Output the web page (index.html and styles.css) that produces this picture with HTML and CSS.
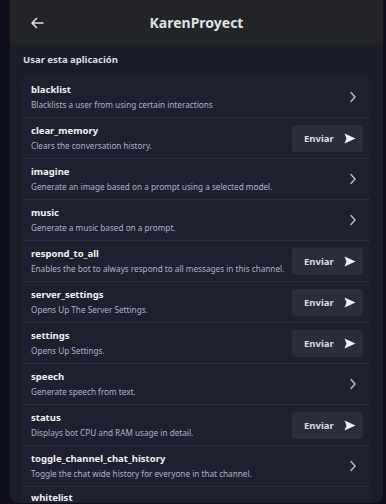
FILE: index.html
```html
<!DOCTYPE html>
<html lang="es">
<head>
    <meta charset="UTF-8">
    <meta name="viewport" content="width=device-width, initial-scale=1.0">
    <title>KarenProyect</title>
    <link rel="stylesheet" href="styles.css">
</head>
<body>

    <div class="panel">
        <div class="header">
            <svg class="back" width="14" height="12" viewBox="0 0 14 12">
                <path d="M13 6H2M6.5 1.5L2 6l4.5 4.5" fill="none" stroke="#dfe1e5" stroke-width="1.6" stroke-linecap="round" stroke-linejoin="round"/>
            </svg>
            <h1 class="title">KarenProyect</h1>
        </div>

        <p class="section-title">Usar esta aplicación</p>

        <div class="list">
            <div class="row">
                <div class="info">
                    <span class="name">blacklist</span>
                    <span class="desc">Blacklists a user from using certain interactions</span>
                </div>
                <svg class="chevron" width="8" height="12" viewBox="0 0 8 12"><path d="M2 1.5L6 6l-4 4.5" fill="none" stroke="#b5bac1" stroke-width="1.5" stroke-linecap="round" stroke-linejoin="round"/></svg>
            </div>
            <div class="row">
                <div class="info">
                    <span class="name">clear_memory</span>
                    <span class="desc">Clears the conversation history.</span>
                </div>
                <button class="send">Enviar <svg width="12" height="11" viewBox="0 0 12 11"><path d="M0.5 0.5L11.5 5.5L0.5 10.5L2.5 5.5Z" fill="#f2f3f5"/></svg></button>
            </div>
            <div class="row">
                <div class="info">
                    <span class="name">imagine</span>
                    <span class="desc">Generate an image based on a prompt using a selected model.</span>
                </div>
                <svg class="chevron" width="8" height="12" viewBox="0 0 8 12"><path d="M2 1.5L6 6l-4 4.5" fill="none" stroke="#b5bac1" stroke-width="1.5" stroke-linecap="round" stroke-linejoin="round"/></svg>
            </div>
            <div class="row">
                <div class="info">
                    <span class="name">music</span>
                    <span class="desc">Generate a music based on a prompt.</span>
                </div>
                <svg class="chevron" width="8" height="12" viewBox="0 0 8 12"><path d="M2 1.5L6 6l-4 4.5" fill="none" stroke="#b5bac1" stroke-width="1.5" stroke-linecap="round" stroke-linejoin="round"/></svg>
            </div>
            <div class="row">
                <div class="info">
                    <span class="name">respond_to_all</span>
                    <span class="desc">Enables the bot to always respond to all messages in this channel.</span>
                </div>
                <button class="send">Enviar <svg width="12" height="11" viewBox="0 0 12 11"><path d="M0.5 0.5L11.5 5.5L0.5 10.5L2.5 5.5Z" fill="#f2f3f5"/></svg></button>
            </div>
            <div class="row">
                <div class="info">
                    <span class="name">server_settings</span>
                    <span class="desc">Opens Up The Server Settings.</span>
                </div>
                <button class="send">Enviar <svg width="12" height="11" viewBox="0 0 12 11"><path d="M0.5 0.5L11.5 5.5L0.5 10.5L2.5 5.5Z" fill="#f2f3f5"/></svg></button>
            </div>
            <div class="row">
                <div class="info">
                    <span class="name">settings</span>
                    <span class="desc">Opens Up Settings.</span>
                </div>
                <button class="send">Enviar <svg width="12" height="11" viewBox="0 0 12 11"><path d="M0.5 0.5L11.5 5.5L0.5 10.5L2.5 5.5Z" fill="#f2f3f5"/></svg></button>
            </div>
            <div class="row">
                <div class="info">
                    <span class="name">speech</span>
                    <span class="desc">Generate speech from text.</span>
                </div>
                <svg class="chevron" width="8" height="12" viewBox="0 0 8 12"><path d="M2 1.5L6 6l-4 4.5" fill="none" stroke="#b5bac1" stroke-width="1.5" stroke-linecap="round" stroke-linejoin="round"/></svg>
            </div>
            <div class="row">
                <div class="info">
                    <span class="name">status</span>
                    <span class="desc">Displays bot CPU and RAM usage in detail.</span>
                </div>
                <button class="send">Enviar <svg width="12" height="11" viewBox="0 0 12 11"><path d="M0.5 0.5L11.5 5.5L0.5 10.5L2.5 5.5Z" fill="#f2f3f5"/></svg></button>
            </div>
            <div class="row">
                <div class="info">
                    <span class="name">toggle_channel_chat_history</span>
                    <span class="desc">Toggle the chat wide history for everyone in that channel.</span>
                </div>
                <svg class="chevron" width="8" height="12" viewBox="0 0 8 12"><path d="M2 1.5L6 6l-4 4.5" fill="none" stroke="#b5bac1" stroke-width="1.5" stroke-linecap="round" stroke-linejoin="round"/></svg>
            </div>
            <div class="row row-cut">
                <div class="info">
                    <span class="name">whitelist</span>
                </div>
            </div>
        </div>
    </div>

</body>
</html>
```

FILE: styles.css
```css
body {
    margin: 0;
    background-color: #0e0f1b;
    font-family: "Noto Sans", "Open Sans", sans-serif;
    height: 504px;
    overflow: hidden;
}
.panel {
    margin: 0 3px 0 10px;
    height: 503px;
    background: #1c1d2b;
    border-radius: 0 0 8px 8px;
    overflow: hidden;
}
.header {
    height: 45px;
    background: #232428;
    display: flex;
    align-items: center;
}
.back {
    margin-left: 20px;
}
.title {
    flex: 1;
    margin: 0 34px 0 0;
    text-align: center;
    font-size: 14px;
    font-weight: 700;
    color: #dfe1e5;
}
.section-title {
    margin: 0;
    padding: 8px 13px 11px;
    font-size: 9.5px;
    font-weight: 700;
    color: #dbdee1;
}
.list {
    margin: 0 12px;
    background: #1e2030;
    border-radius: 6px 6px 0 0;
}
.row {
    display: flex;
    align-items: center;
    height: 40px;
    padding: 0 9px;
    border-bottom: 1px solid #2a2c3b;
}
.row-cut {
    align-items: flex-start;
    padding-top: 6px;
    height: 34px;
}
.info {
    flex: 1;
    display: flex;
    flex-direction: column;
    gap: 3px;
    margin-top: -2px;
}
.name {
    font-size: 9.5px;
    font-weight: 700;
    color: #f2f3f5;
}
.desc {
    font-size: 8.2px;
    color: #adb3c9;
    white-space: nowrap;
}
.chevron {
    margin-right: 5px;
}
.send {
    display: flex;
    align-items: center;
    gap: 10px;
    height: 27px;
    width: 71px;
    padding: 0 0 0 12px;
    border: none;
    border-radius: 4px;
    background: #2b2d3b;
    color: #dbdee1;
    font-family: inherit;
    font-size: 9.5px;
    font-weight: 700;
    margin-right: -1px;
}
```
